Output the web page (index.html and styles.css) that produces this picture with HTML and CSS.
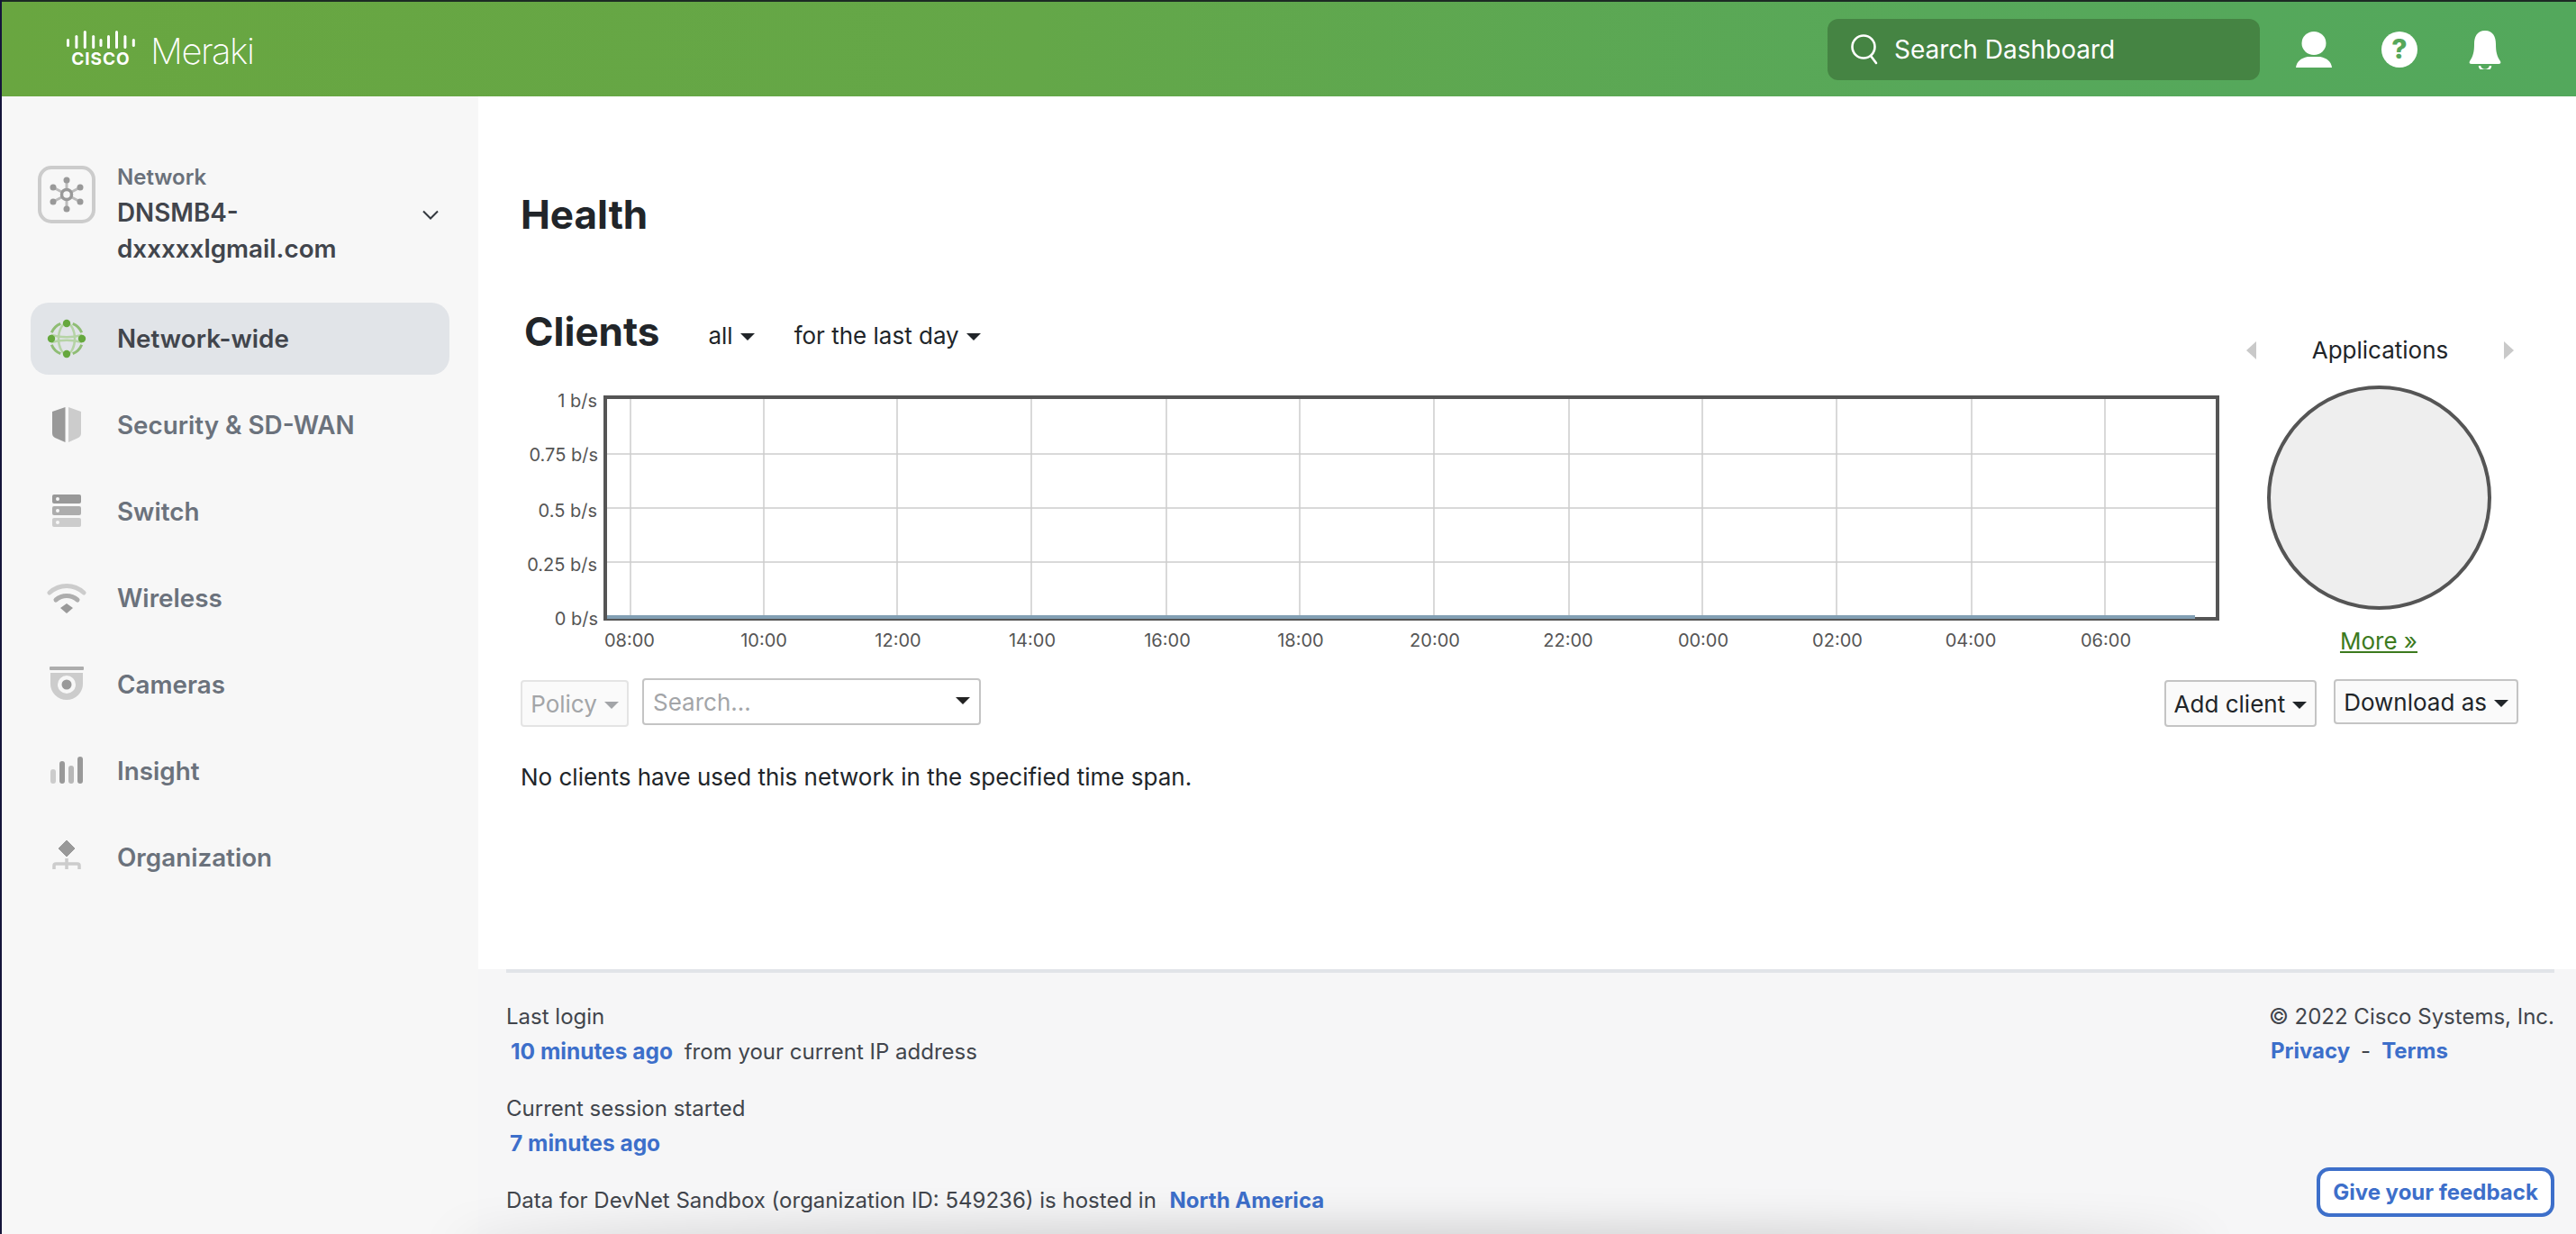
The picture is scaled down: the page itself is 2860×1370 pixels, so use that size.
FILE: index.html
```html
<!DOCTYPE html>
<html lang="en">
<head>
    <meta charset="UTF-8">
    <title>Health - Meraki Dashboard</title>
    <link rel="stylesheet" href="styles.css">
</head>
<body>
    <header class="topbar">
        <div class="brand">
            <div class="cisco-logo">
                <svg width="76" height="22" viewBox="0 0 76 22">
                    <g fill="#fff">
                        <rect x="0" y="9" width="3" height="9" rx="1.5"/>
                        <rect x="9.4" y="5" width="3" height="15" rx="1.5"/>
                        <rect x="18.8" y="0" width="3" height="20" rx="1.5"/>
                        <rect x="28.2" y="5" width="3" height="15" rx="1.5"/>
                        <rect x="36.5" y="9" width="3" height="9" rx="1.5"/>
                        <rect x="45" y="5" width="3" height="15" rx="1.5"/>
                        <rect x="54" y="0" width="3" height="20" rx="1.5"/>
                        <rect x="63.4" y="5" width="3" height="15" rx="1.5"/>
                        <rect x="72.8" y="9" width="3" height="9" rx="1.5"/>
                    </g>
                </svg>
                <span class="cisco-word">cisco</span>
            </div>
            <span class="meraki-word">Meraki</span>
        </div>
        <div class="topbar-right">
            <div class="global-search">
                <svg width="34" height="36" viewBox="0 0 34 36" fill="none" stroke="#fff" stroke-width="2.6">
                    <circle cx="15" cy="15" r="12.5"/>
                    <path d="M23 25l6 8" stroke-linecap="round"/>
                </svg>
                <span>Search Dashboard</span>
            </div>
            <div class="top-icons">
                <svg width="42" height="42" viewBox="0 0 42 42" fill="#fff">
                    <ellipse cx="21" cy="14" rx="13.5" ry="13"/>
                    <path d="M1 41c1-7 5-10 13-12h14c8 2 12 5 13 12z"/>
                </svg>
                <svg width="42" height="42" viewBox="0 0 42 42">
                    <circle cx="21" cy="21" r="20" fill="#fff"/>
                    <text x="21" y="31" text-anchor="middle" class="help-mark">?</text>
                </svg>
                <svg width="42" height="44" viewBox="0 0 42 44" fill="#fff">
                    <path d="M21 1c9 0 12 7 12 15 0 8 1 13 5 19 1 2 0 3-2 3H6c-2 0-3-1-2-3 4-6 5-11 5-19C9 8 12 1 21 1z"/>
                    <path d="M15 40a6 5 0 0 0 12 0" fill="none" stroke="#fff" stroke-width="2.5"/>
                </svg>
            </div>
        </div>
    </header>

    <div class="shell">
        <aside class="sidebar">
            <div class="network-picker">
                <svg class="network-badge" width="64" height="64" viewBox="0 0 64 64">
                    <rect x="2" y="2" width="60" height="60" rx="13" fill="none" stroke="#cccccc" stroke-width="4"/>
                    <g stroke="#bcbcbc" stroke-width="3">
                        <path d="M32 16v32M17 24l30 16M47 24L17 40"/>
                    </g>
                    <g fill="#999">
                        <circle cx="32" cy="16" r="3.5"/>
                        <circle cx="32" cy="48" r="3.5"/>
                        <circle cx="17" cy="24" r="3.5"/>
                        <circle cx="47" cy="24" r="3.5"/>
                        <circle cx="17" cy="40" r="3.5"/>
                        <circle cx="47" cy="40" r="3.5"/>
                    </g>
                    <circle cx="32" cy="32" r="5.5" fill="#f7f7f7" stroke="#999" stroke-width="3.5"/>
                </svg>
                <div class="network-text">
                    <div class="network-label">Network</div>
                    <div class="network-name">DNSMB4-<br>dxxxxxlgmail.com</div>
                </div>
                <svg class="network-chevron" width="18" height="11" viewBox="0 0 18 11" fill="none" stroke="#33383e" stroke-width="2">
                    <path d="M1 1.5l8 8 8-8"/>
                </svg>
            </div>

            <nav class="side-nav">
                <a class="nav-item active" href="#">
                    <svg width="44" height="44" viewBox="0 0 44 44" fill="none">
                        <g stroke="#b5d3a5" stroke-width="2.5">
                            <ellipse cx="22" cy="22" rx="9" ry="17"/>
                            <path d="M5 18c11 3 23 3 34 0M5 26c11-3 23-3 34 0"/>
                        </g>
                        <g stroke="#8fbd74" stroke-width="3">
                            <path d="M15.25 5.3A18 18 0 0 0 5.3 15.25M28.75 5.3A18 18 0 0 1 38.7 15.25M5.3 28.75A18 18 0 0 0 15.25 38.7M38.7 28.75A18 18 0 0 1 28.75 38.7"/>
                        </g>
                        <g fill="#66a83e">
                            <circle cx="22" cy="5" r="4.2"/>
                            <circle cx="22" cy="39" r="4.2"/>
                            <circle cx="5" cy="22" r="4.2"/>
                            <circle cx="39" cy="22" r="4.2"/>
                        </g>
                    </svg>
                    <span>Network-wide</span>
                </a>
                <a class="nav-item" href="#">
                    <svg width="44" height="44" viewBox="0 0 44 44">
                        <path d="M20.5 2v39L9 36c-2-1-3-3-3-5V7z" fill="#999"/>
                        <path d="M24 2v39l11-5c2-1 3-3 3-5V7z" fill="#ccc"/>
                    </svg>
                    <span>Security &amp; SD-WAN</span>
                </a>
                <a class="nav-item" href="#">
                    <svg width="44" height="44" viewBox="0 0 44 44">
                        <rect x="6" y="3" width="32" height="10" rx="2" fill="#999"/>
                        <rect x="6" y="16" width="32" height="10" rx="2" fill="#adadad"/>
                        <rect x="6" y="29" width="32" height="10" rx="2" fill="#ccc"/>
                        <g fill="#f7f7f7">
                            <circle cx="12" cy="8" r="2"/>
                            <circle cx="12" cy="21" r="2"/>
                            <circle cx="12" cy="34" r="2"/>
                        </g>
                    </svg>
                    <span>Switch</span>
                </a>
                <a class="nav-item" href="#">
                    <svg width="44" height="44" viewBox="0 0 44 44" fill="none">
                        <path d="M3 16c11-10 27-10 38 0" stroke="#ccc" stroke-width="5" stroke-linecap="round"/>
                        <path d="M10 24c7-6 17-6 24 0" stroke="#adadad" stroke-width="5" stroke-linecap="round"/>
                        <path d="M22 28l7 5-7 6-7-6z" fill="#999"/>
                    </svg>
                    <span>Wireless</span>
                </a>
                <a class="nav-item" href="#">
                    <svg width="44" height="44" viewBox="0 0 44 44">
                        <rect x="3" y="2" width="38" height="4" rx="1" fill="#adadad"/>
                        <path d="M4 9h36v12a18 18 0 0 1-36 0z" fill="#ccc"/>
                        <circle cx="22" cy="22" r="10" fill="#f7f7f7"/>
                        <circle cx="22" cy="22" r="5.5" fill="#999"/>
                    </svg>
                    <span>Cameras</span>
                </a>
                <a class="nav-item" href="#">
                    <svg width="44" height="44" viewBox="0 0 44 44">
                        <rect x="4" y="20" width="6" height="16" rx="3" fill="#ccc"/>
                        <rect x="14" y="11" width="6" height="25" rx="3" fill="#999"/>
                        <rect x="24" y="16" width="6" height="20" rx="3" fill="#b8b8b8"/>
                        <rect x="34" y="6" width="6" height="30" rx="3" fill="#999"/>
                    </svg>
                    <span>Insight</span>
                </a>
                <a class="nav-item" href="#">
                    <svg width="44" height="44" viewBox="0 0 44 44">
                        <path d="M22 3l9 9-9 9-9-9z" fill="#999" stroke="#999" stroke-width="1" stroke-linejoin="round"/>
                        <path d="M8 35v-4c0-1 0-2 2-2h24c2 0 2 1 2 2v4M22 23v12" fill="none" stroke="#ccc" stroke-width="3.5"/>
                    </svg>
                    <span>Organization</span>
                </a>
            </nav>
        </aside>

        <div class="content">
            <main class="main">
                <h1 class="page-title">Health</h1>
                <div class="clients-panel">
                    <div class="clients-left">
                        <div class="clients-head">
                            <h2>Clients</h2>
                            <span class="filter">all<i class="caret"></i></span>
                            <span class="filter">for the last day<i class="caret"></i></span>
                        </div>
                        <svg class="usage-chart" width="1900" height="300" viewBox="578 430 1900 300">
                            <g stroke="#cdcdcd" stroke-width="1.5">
                                <path d="M673 505H2461M673 565H2461M673 625H2461"/>
                                <path d="M700 442V686M848 442V686M996 442V686M1145 442V686M1295 442V686M1443 442V686M1592 442V686M1742 442V686M1890 442V686M2039 442V686M2189 442V686M2337 442V686"/>
                            </g>
                            <rect x="672" y="442" width="1790" height="246" fill="none" stroke="#555" stroke-width="4"/>
                            <rect x="674" y="684" width="1763" height="4" fill="#829fb4"/>
                            <g class="axis-y" text-anchor="end">
                                <text x="663" y="453">1 b/s</text>
                                <text x="664" y="513">0.75 b/s</text>
                                <text x="663" y="575">0.5 b/s</text>
                                <text x="663" y="635">0.25 b/s</text>
                                <text x="664" y="695">0 b/s</text>
                            </g>
                            <g class="axis-x" text-anchor="middle">
                                <text x="699" y="719">08:00</text>
                                <text x="848" y="719">10:00</text>
                                <text x="997" y="719">12:00</text>
                                <text x="1146" y="719">14:00</text>
                                <text x="1296" y="719">16:00</text>
                                <text x="1444" y="719">18:00</text>
                                <text x="1593" y="719">20:00</text>
                                <text x="1741" y="719">22:00</text>
                                <text x="1891" y="719">00:00</text>
                                <text x="2040" y="719">02:00</text>
                                <text x="2188" y="719">04:00</text>
                                <text x="2338" y="719">06:00</text>
                            </g>
                        </svg>
                    </div>
                    <div class="apps-panel">
                        <div class="apps-title">
                            <i class="arrow-left"></i>
                            <span>Applications</span>
                            <i class="arrow-right"></i>
                        </div>
                        <div class="apps-pie"></div>
                        <a class="more-link" href="#">More »</a>
                    </div>
                </div>
                <div class="toolbar">
                    <div class="toolbar-group">
                        <button class="btn btn-disabled">Policy<i class="caret"></i></button>
                        <div class="search-select">
                            <span>Search...</span>
                            <i class="caret caret-dark"></i>
                        </div>
                    </div>
                    <div class="toolbar-group toolbar-right">
                        <button class="btn btn-add">Add client<i class="caret"></i></button>
                        <button class="btn btn-download">Download as<i class="caret"></i></button>
                    </div>
                </div>
                <p class="empty-note">No clients have used this network in the specified time span.</p>
            </main>

            <footer class="footer">
                <div class="footer-left">
                    <div class="foot-line">Last login</div>
                    <div class="foot-line"><a class="foot-link first" href="#">10 minutes ago</a> from your current IP address</div>
                    <div class="foot-line foot-gap">Current session started</div>
                    <div class="foot-line"><a class="foot-link second" href="#">7 minutes ago</a></div>
                    <div class="foot-line foot-gap">Data for DevNet Sandbox (organization ID: 549236) is hosted in <a class="foot-link north" href="#">North America</a></div>
                </div>
                <div class="footer-right">
                    <div class="foot-line">© 2022 Cisco Systems, Inc.</div>
                    <div class="foot-line foot-links"><a class="foot-link" href="#">Privacy</a><span>-</span><a class="foot-link" href="#">Terms</a></div>
                </div>
            </footer>
        </div>
    </div>

    <button class="feedback">Give your feedback</button>
    <div class="bottom-shade"></div>
</body>
</html>
```

FILE: styles.css
```css
/* General styles */
html, body {
    height: 100%;
}

body {
    margin: 0;
    height: 1370px;
    overflow: hidden;
    position: relative;
    display: flex;
    flex-direction: column;
    box-sizing: border-box;
    border-left: 2px solid #15153a;
    font-family: Inter, "Noto Sans", sans-serif;
    color: #212529;
    background-color: #fff;
}

a {
    text-decoration: none;
}

/* Top bar */
.topbar {
    height: 107px;
    box-sizing: border-box;
    border-top: 2px solid #1c2a24;
    display: flex;
    justify-content: space-between;
    align-items: center;
    padding: 0 80px 0 72px;
    background: linear-gradient(90deg, #69a640 0%, #64a748 40%, #57a85a 75%, #53a85c 100%);
    flex-shrink: 0;
}

.brand {
    display: flex;
    align-items: center;
    gap: 17px;
}

.cisco-logo {
    display: flex;
    flex-direction: column;
    align-items: center;
    width: 76px;
}

.cisco-word {
    color: #fff;
    font-size: 19px;
    font-weight: 700;
    line-height: 18px;
    letter-spacing: 1px;
    text-transform: uppercase;
    margin-top: 1px;
}

.meraki-word {
    color: #fff;
    font-size: 40px;
    font-weight: 200;
    line-height: 50px;
    letter-spacing: -1.5px;
    margin-top: 4px;
}

.topbar-right {
    display: flex;
    align-items: center;
    gap: 39px;
}

.global-search {
    width: 480px;
    height: 68px;
    box-sizing: border-box;
    padding: 0 0 0 25px;
    display: flex;
    align-items: center;
    gap: 15px;
    border-radius: 12px;
    background-color: #458443;
    color: #fff;
    font-size: 28px;
}

.top-icons {
    display: flex;
    align-items: center;
    gap: 53px;
}

.help-mark {
    fill: #56a75a;
    font-size: 30px;
    font-weight: 800;
}

/* Sidebar */
.shell {
    flex: 1;
    display: flex;
    min-height: 0;
}

.sidebar {
    width: 529px;
    flex-shrink: 0;
    box-sizing: border-box;
    padding: 77px 32px 0;
    background-color: #f7f7f7;
}

.network-picker {
    display: flex;
    align-items: flex-start;
    padding-left: 8px;
    position: relative;
}

.network-badge {
    flex-shrink: 0;
    margin-right: 24px;
}

.network-label {
    font-size: 24px;
    font-weight: 600;
    line-height: 26px;
    color: #6a717b;
}

.network-name {
    font-size: 27.8px;
    font-weight: 600;
    line-height: 40px;
    color: #41454c;
    margin-top: 6px;
}

.network-chevron {
    position: absolute;
    top: 49px;
    left: 435px;
}

.side-nav {
    display: flex;
    flex-direction: column;
    gap: 16px;
    margin-top: 40px;
}

.nav-item {
    height: 80px;
    display: flex;
    align-items: center;
    padding-left: 18px;
    gap: 34px;
    border-radius: 20px;
    font-size: 27.8px;
    font-weight: 600;
    color: #6b727c;
}

.nav-item svg {
    flex-shrink: 0;
}

.nav-item.active {
    background-color: #e1e4e8;
    color: #41454c;
}

/* Main area */
.content {
    flex: 1;
    display: flex;
    flex-direction: column;
    min-width: 0;
}

.main {
    height: 969px;
    flex-shrink: 0;
    box-sizing: border-box;
    padding: 0 69px 0 47px;
}

.page-title {
    margin: 103px 0 0;
    font-size: 44px;
    font-weight: 700;
    line-height: 56px;
    color: #212529;
}

.clients-panel {
    display: flex;
    justify-content: space-between;
    margin-top: 72px;
}

.clients-left {
    display: flex;
    flex-direction: column;
}

.clients-head {
    display: flex;
    align-items: flex-start;
    height: 67px;
    padding-left: 4px;
}

.clients-head h2 {
    margin: 0 54px 0 0;
    font-size: 44px;
    font-weight: 700;
    line-height: 60px;
}

.filter {
    font-size: 26px;
    margin: 19px 44px 0 0;
}

.caret {
    display: inline-block;
    margin-left: 8px;
    vertical-align: 4px;
    border-top: 8px solid #212529;
    border-left: 8px solid transparent;
    border-right: 8px solid transparent;
}

.usage-chart {
    display: block;
    margin-top: 24px;
}

.axis-y text,
.axis-x text {
    font-family: Inter, "Noto Sans", sans-serif;
    font-size: 20px;
    fill: #555;
}

.apps-panel {
    width: 300px;
    display: flex;
    flex-direction: column;
    align-items: center;
    padding-top: 32px;
}

.apps-title {
    width: 100%;
    display: flex;
    justify-content: space-between;
    align-items: center;
    box-sizing: border-box;
    padding: 0 0 0 3px;
    font-size: 26px;
    line-height: 38px;
}

.arrow-left {
    border-right: 11px solid #c9c9c9;
    border-top: 10px solid transparent;
    border-bottom: 10px solid transparent;
}

.arrow-right {
    border-left: 11px solid #c9c9c9;
    border-top: 10px solid transparent;
    border-bottom: 10px solid transparent;
}

.apps-pie {
    width: 249px;
    height: 249px;
    box-sizing: border-box;
    margin-top: 20px;
    border: 4px solid #555;
    border-radius: 50%;
    background-color: #eee;
}

.more-link {
    margin-top: 17px;
    font-size: 26px;
    line-height: 36px;
    color: #3c7a1e;
    text-decoration: underline;
}

/* Toolbar */
.toolbar {
    display: flex;
    justify-content: space-between;
    margin-top: 23px;
    margin-right: -7px;
    padding-right: 2px;
}

.toolbar-group {
    display: flex;
    align-items: flex-start;
    gap: 15px;
}

.toolbar-right {
    gap: 19px;
}

.btn {
    height: 52px;
    box-sizing: border-box;
    padding: 0 10px;
    margin-top: 2px;
    border: 2px solid #c4c4c4;
    border-radius: 4px;
    background-color: #fafafa;
    font-family: Inter, "Noto Sans", sans-serif;
    font-size: 26px;
    color: #212529;
}

.btn-add {
    padding: 0 9px;
}

.btn-download {
    height: 50px;
    padding: 0 9px;
    margin-top: 1px;
}

.btn-disabled {
    width: 120px;
    padding: 0 9px;
    white-space: nowrap;
    border-color: #e4e4e4;
    color: #a3a5a8;
}

.btn-disabled .caret {
    border-top-color: #a3a5a8;
}

.search-select {
    width: 376px;
    height: 52px;
    box-sizing: border-box;
    padding: 0 10px;
    display: flex;
    align-items: center;
    justify-content: space-between;
    border: 2px solid #c4c4c4;
    border-radius: 4px;
    font-size: 26px;
    color: #a3a5a8;
}

.caret-dark {
    margin: 0 0 2px;
    border-top-color: #222;
}

.empty-note {
    margin: 37px 0 0;
    font-size: 26px;
    line-height: 38px;
    color: #212529;
}

/* Footer */
.footer {
    flex: 1;
    position: relative;
    display: flex;
    justify-content: space-between;
    padding: 0 24px 0 31px;
    background-color: #f6f6f7;
}

.footer-left,
.footer-right {
    padding-top: 34px;
}

.footer::before {
    content: "";
    position: absolute;
    top: 0;
    left: 31px;
    right: 24px;
    height: 4px;
    background-color: #e1e4e8;
}

.foot-line {
    font-size: 24px;
    line-height: 38px;
    color: #41454c;
}

.foot-gap {
    margin-top: 25px;
}

.foot-link {
    font-weight: 700;
    color: #3d6fca;
    margin-right: 6px;
}

.foot-link.first {
    margin-left: 5px;
    font-size: 24.5px;
}

.foot-link.second {
    margin-left: 4px;
    font-size: 24.5px;
}

.foot-link.north {
    margin-left: 8px;
}

.foot-links {
    display: flex;
    gap: 12px;
    padding-left: 2px;
}

.foot-links .foot-link {
    margin: 0;
}

.feedback {
    position: absolute;
    left: 2570px;
    top: 1296px;
    width: 264px;
    height: 55px;
    border: 4px solid #3d6fca;
    border-radius: 14px;
    background-color: #fff;
    font-family: Inter, "Noto Sans", sans-serif;
    font-size: 24px;
    font-weight: 700;
    color: #3d6fca;
    padding: 0;
}

.bottom-shade {
    position: absolute;
    left: 500px;
    width: 1950px;
    bottom: -30px;
    height: 30px;
    box-shadow: 0 0 50px rgba(0, 0, 0, 0.25);
    border-radius: 50%;
}
```
